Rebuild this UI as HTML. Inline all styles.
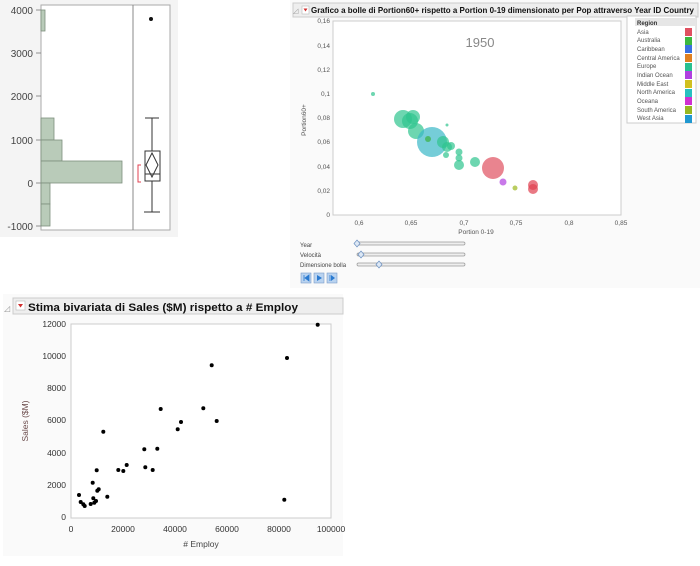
<!DOCTYPE html>
<html><head><meta charset="utf-8"><style>
html,body{margin:0;padding:0;background:#fff;width:700px;height:566px;overflow:hidden}
svg{display:block}
text{font-family:"Liberation Sans",sans-serif}
</style></head><body>
<svg width="700" height="566" viewBox="0 0 700 566" xmlns="http://www.w3.org/2000/svg">
<!-- Panel 1 -->
<rect x="0" y="0" width="178" height="237" fill="#f4f4f4"/>
<rect x="41" y="5" width="129" height="225" fill="#fff" stroke="#aaa"/>
<line x1="133" y1="5" x2="133" y2="230" stroke="#888"/>
<g font-size="10" fill="#444" text-anchor="end">
<text x="33" y="14">4000</text><text x="33" y="57">3000</text><text x="33" y="100">2000</text>
<text x="33" y="144">1000</text><text x="33" y="187">0</text><text x="33" y="230">-1000</text>
</g>
<g stroke="#777" stroke-width="0.8">
<line x1="36" y1="10" x2="41" y2="10"/><line x1="36" y1="53" x2="41" y2="53"/><line x1="36" y1="96" x2="41" y2="96"/><line x1="36" y1="140" x2="41" y2="140"/><line x1="36" y1="183" x2="41" y2="183"/><line x1="36" y1="226" x2="41" y2="226"/>
</g>
<g fill="#b9cbb9" stroke="#7d8f7d" stroke-width="0.8">
<rect x="41" y="10" width="4" height="21"/>
<rect x="41" y="118" width="13" height="22"/>
<rect x="41" y="140" width="21" height="21"/>
<rect x="41" y="161" width="81" height="22"/>
<rect x="41" y="183" width="9" height="21"/>
<rect x="41" y="204" width="9" height="22"/>
</g>
<circle cx="151" cy="19" r="2" fill="#111"/>
<g stroke="#333" stroke-width="1" fill="none">
<line x1="152" y1="118" x2="152" y2="151"/><line x1="152" y1="181" x2="152" y2="212"/>
<line x1="145" y1="118" x2="159" y2="118"/><line x1="144" y1="212" x2="160" y2="212"/>
<rect x="145" y="151" width="15" height="30"/>
<line x1="145" y1="174" x2="160" y2="174"/>
<polygon points="152,153 158,165 152,177 146,165"/>
</g>
<path d="M141,165 H138 V182 H141" stroke="#e04050" fill="none"/>

<!-- Panel 2 -->
<rect x="290" y="0" width="410" height="288" fill="#fafafa"/>
<rect x="293" y="3" width="405" height="14" fill="#eee" stroke="#ccc"/>
<text x="293" y="13" font-size="7" fill="#999">◿</text>
<rect x="302" y="6" width="7" height="8" fill="#fff" stroke="#bbb" stroke-width="0.6"/>
<path d="M303.5,8.5 L307.5,8.5 L305.5,11.5Z" fill="#d03030"/>
<text x="311" y="13" font-size="8.5" font-weight="bold" fill="#111" textLength="383" lengthAdjust="spacingAndGlyphs">Grafico a bolle di Portion60+ rispetto a Portion 0-19 dimensionato per Pop attraverso Year ID Country</text>
<rect x="333" y="21" width="288" height="194" fill="#fff" stroke="#ccc"/>
<g font-size="6.5" fill="#555" text-anchor="end">
<text x="330" y="23">0,16</text><text x="330" y="48">0,14</text><text x="330" y="72">0,12</text><text x="330" y="96">0,1</text>
<text x="330" y="120">0,08</text><text x="330" y="144">0,06</text><text x="330" y="169">0,04</text><text x="330" y="193">0,02</text><text x="330" y="217">0</text>
</g>
<g font-size="6.5" fill="#555" text-anchor="middle">
<text x="359" y="225">0,6</text><text x="411" y="225">0,65</text><text x="464" y="225">0,7</text><text x="516" y="225">0,75</text><text x="569" y="225">0,8</text><text x="621" y="225">0,85</text>
<text x="476" y="234">Portion 0-19</text>
</g>
<text x="306" y="120" font-size="6.5" fill="#555" text-anchor="middle" transform="rotate(-90 306 120)">Portion60+</text>
<text x="480" y="47" font-size="13" fill="#888" text-anchor="middle">1950</text>
<g fill-opacity="0.7">
<circle cx="373" cy="94" r="2" fill="#2fc48f"/>
<circle cx="403" cy="119" r="9" fill="#2fc48f"/>
<circle cx="410" cy="121" r="8" fill="#2fc48f"/>
<circle cx="413" cy="117" r="7" fill="#2fc48f"/>
<circle cx="416" cy="131" r="8" fill="#2fc48f"/>
<circle cx="432" cy="142" r="15" fill="#3bb8c8"/>
<circle cx="428" cy="139" r="3" fill="#3bb040"/>
<circle cx="443" cy="142" r="6" fill="#2fc48f"/>
<circle cx="447" cy="125" r="1.5" fill="#2fc48f"/>
<circle cx="447" cy="147" r="5" fill="#2fc48f"/>
<circle cx="451" cy="146" r="4" fill="#2fc48f"/>
<circle cx="446" cy="155" r="3" fill="#2fc48f"/>
<circle cx="459" cy="152" r="3.5" fill="#2fc48f"/>
<circle cx="459" cy="158" r="3.5" fill="#2fc48f"/>
<circle cx="459" cy="165" r="5" fill="#2fc48f"/>
<circle cx="475" cy="162" r="5" fill="#2fc48f"/>
<circle cx="493" cy="168" r="11" fill="#e05060"/>
<circle cx="503" cy="182" r="3.5" fill="#b040e0"/>
<circle cx="515" cy="188" r="2.5" fill="#9cb81c"/>
<circle cx="533" cy="185" r="5" fill="#e04050"/>
<circle cx="533" cy="189" r="5" fill="#e04050"/>
</g>
<!-- legend -->
<rect x="627" y="16" width="69" height="107" fill="#fff" stroke="#ccc"/>
<rect x="635" y="18" width="60" height="8" fill="#e6e6e6"/>
<text x="637" y="25" font-size="6" font-weight="bold" fill="#333">Region</text>
<g font-size="6" fill="#555">
<text x="637" y="34">Asia</text><text x="637" y="42">Australia</text><text x="637" y="51">Caribbean</text><text x="637" y="60">Central America</text>
<text x="637" y="68">Europe</text><text x="637" y="77">Indian Ocean</text><text x="637" y="86">Middle East</text><text x="637" y="94">North America</text>
<text x="637" y="103">Oceana</text><text x="637" y="112">South America</text><text x="637" y="120">West Asia</text>
</g>
<g>
<rect x="685" y="28" width="7" height="8" fill="#e05060"/><rect x="685" y="37" width="7" height="8" fill="#3cb840"/>
<rect x="685" y="45" width="7" height="8" fill="#3a70e0"/><rect x="685" y="54" width="7" height="8" fill="#e08020"/>
<rect x="685" y="63" width="7" height="8" fill="#28c090"/><rect x="685" y="71" width="7" height="8" fill="#b040e0"/>
<rect x="685" y="80" width="7" height="8" fill="#d0c020"/><rect x="685" y="89" width="7" height="8" fill="#28c0c0"/>
<rect x="685" y="97" width="7" height="8" fill="#d030d0"/><rect x="685" y="106" width="7" height="8" fill="#98b820"/>
<rect x="685" y="115" width="7" height="8" fill="#2098d0"/>
</g>
<!-- sliders -->
<g font-size="6" fill="#444">
<text x="300" y="247">Year</text><text x="300" y="257">Velocità</text><text x="300" y="267">Dimensione bolla</text>
</g>
<g fill="#eee" stroke="#999" stroke-width="0.7">
<rect x="357" y="242" width="108" height="3" rx="1.5"/>
<rect x="357" y="253" width="108" height="3" rx="1.5"/>
<rect x="357" y="263" width="108" height="3" rx="1.5"/>
</g>
<g fill="#dde8f5" stroke="#6a8fc0" stroke-width="0.7">
<polygon points="357,240 360,243.5 357,247 354,243.5"/>
<polygon points="361,251 364,254.5 361,258 358,254.5"/>
<polygon points="379,261 382,264.5 379,268 376,264.5"/>
</g>
<g>
<rect x="301" y="273" width="10" height="10" fill="#b9d3f0" stroke="#7a9cc8" stroke-width="0.6"/>
<rect x="314" y="273" width="10" height="10" fill="#b9d3f0" stroke="#7a9cc8" stroke-width="0.6"/>
<rect x="327" y="273" width="10" height="10" fill="#b9d3f0" stroke="#7a9cc8" stroke-width="0.6"/>
<path d="M304,275 v6 M309,275 l-4,3 l4,3z" fill="#2a7ad0" stroke="#2a7ad0" stroke-width="0.8"/>
<path d="M317,275 l5,3 l-5,3z" fill="#2a7ad0"/>
<path d="M330,275 v6" stroke="#2a7ad0" stroke-width="0.8"/><path d="M331,275 l4,3 l-4,3z" fill="#2a7ad0"/>
</g>

<!-- Panel 3 -->
<rect x="3" y="294" width="340" height="262" fill="#fafafa"/>
<rect x="13" y="298" width="330" height="16" fill="#eee" stroke="#ccc"/>
<text x="4" y="311" font-size="8" fill="#999">◿</text>
<rect x="16" y="301" width="9" height="9" fill="#fff" stroke="#bbb" stroke-width="0.6"/>
<path d="M18,304 L23,304 L20.5,307.5Z" fill="#d03030"/>
<text x="28" y="311" font-size="11" font-weight="bold" fill="#111" textLength="270" lengthAdjust="spacingAndGlyphs">Stima bivariata di Sales ($M) rispetto a # Employ</text>
<rect x="71" y="324" width="260" height="194" fill="#fff" stroke="#ccc"/>
<g font-size="8.5" fill="#333" text-anchor="end">
<text x="66" y="327">12000</text><text x="66" y="359">10000</text><text x="66" y="391">8000</text><text x="66" y="423">6000</text>
<text x="66" y="456">4000</text><text x="66" y="488">2000</text><text x="66" y="520">0</text>
</g>
<g font-size="8.5" fill="#333" text-anchor="middle">
<text x="71" y="532">0</text><text x="123" y="532">20000</text><text x="175" y="532">40000</text><text x="227" y="532">60000</text><text x="279" y="532">80000</text><text x="331" y="532">100000</text>
</g>
<text x="201" y="547" font-size="8.5" fill="#444" text-anchor="middle"># Employ</text>
<text x="28" y="421" font-size="8.5" fill="#6a4a4a" text-anchor="middle" transform="rotate(-90 28 421)">Sales ($M)</text>
<g fill="#000">
<circle cx="79" cy="495" r="2"/><circle cx="80.7" cy="502" r="2"/><circle cx="83.3" cy="504.3" r="2"/><circle cx="84.7" cy="506" r="2"/>
<circle cx="90.7" cy="504" r="2"/><circle cx="92.7" cy="482.7" r="2"/><circle cx="93.3" cy="498.3" r="2"/><circle cx="94.3" cy="502.7" r="2"/>
<circle cx="96" cy="501" r="2"/><circle cx="96.7" cy="470.3" r="2"/><circle cx="97.3" cy="490.7" r="2"/><circle cx="98.7" cy="489.3" r="2"/>
<circle cx="103.3" cy="431.7" r="2"/><circle cx="107.3" cy="496.7" r="2"/><circle cx="118.3" cy="470" r="2"/><circle cx="123.3" cy="471" r="2"/>
<circle cx="126.7" cy="465" r="2"/><circle cx="144.3" cy="449.3" r="2"/><circle cx="145.3" cy="467.3" r="2"/><circle cx="152.7" cy="470" r="2"/>
<circle cx="157.3" cy="448.7" r="2"/><circle cx="160.7" cy="409" r="2"/><circle cx="177.7" cy="429.3" r="2"/><circle cx="181" cy="422" r="2"/>
<circle cx="203.3" cy="408.3" r="2"/><circle cx="211.7" cy="365.3" r="2"/><circle cx="216.7" cy="421" r="2"/><circle cx="284.3" cy="499.7" r="2"/>
<circle cx="287" cy="358" r="2"/><circle cx="317.7" cy="324.7" r="2"/>
</g>
</svg>
</body></html>
